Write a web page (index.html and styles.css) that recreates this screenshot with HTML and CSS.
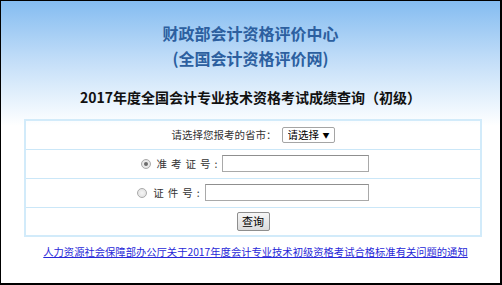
FILE: index.html
```html
<!DOCTYPE html>
<html>
  <head>
    <meta charset="utf-8">
    <title>成绩查询</title>
    <link rel="stylesheet" href="styles.css">
  </head>
  <body>
    <div class="page">
      <div class="header">
        <h1>财政部会计资格评价中心<br>(全国会计资格评价网)</h1>
        <h2>2017年度全国会计专业技术资格考试成绩查询（初级）</h2>
      </div>

      <form class="query">
        <table class="query-table">
          <tr>
            <td>
              <div class="cell">
                <span>请选择您报考的省市：</span>
                <span class="select-wrap">
                  <select>
                    <option>请选择</option>
                  </select>
                </span>
              </div>
            </td>
          </tr>
          <tr>
            <td>
              <div class="cell shift">
                <input type="radio" name="type" checked>
                <span class="spaced">准考证号:</span>
                <input type="text" class="text-input">
              </div>
            </td>
          </tr>
          <tr>
            <td>
              <div class="cell">
                <input type="radio" name="type">
                <span class="spaced">证件号:</span>
                <input type="text" class="text-input wide">
              </div>
            </td>
          </tr>
          <tr>
            <td>
              <div class="cell">
                <button type="button">查询</button>
              </div>
            </td>
          </tr>
        </table>
      </form>

      <p class="notice">
        <a href="#">人力资源社会保障部办公厅关于2017年度会计专业技术初级资格考试合格标准有关问题的通知</a>
      </p>
    </div>
  </body>
</html>
```

FILE: styles.css
```css
* {
  box-sizing: border-box;
  margin: 0;
  padding: 0;
}

html,
body {
  width: 502px;
  height: 285px;
  background: #fff;
  overflow: hidden;
}

body {
  font-family: 'Noto Sans CJK SC', 'Microsoft YaHei', sans-serif;
  color: #333;
}

.page {
  width: 502px;
  height: 285px;
  border-top: 1px solid #000;
  border-left: 1px solid #000;
  border-right: 2px solid #000;
  border-bottom: 2px solid #000;
  background: linear-gradient(#84bcf1 0px, #c3def8 60px, #f1f8fe 110px, #fff 125px);
}

.header {
  text-align: center;
  padding-top: 20px;
}

h1 {
  font-size: 16px;
  line-height: 25px;
  font-weight: bold;
  color: #2c5f9f;
}

h2 {
  margin-top: 16px;
  font-size: 14px;
  line-height: 20px;
  font-weight: bold;
  color: #111;
}

.query {
  margin-top: 12px;
  margin-left: 23px;
  width: 458px;
}

.query-table {
  width: 100%;
  border-collapse: collapse;
  border: 2px solid #d2ebfa;
}

.query-table td {
  height: 29px;
  border-top: 1px solid #cbe7f8;
  font-size: 10.5px;
  line-height: 16px;
  vertical-align: middle;
}

.cell {
  display: flex;
  justify-content: center;
  align-items: center;
}

.cell.shift {
  padding-left: 4px;
}

.select-wrap {
  position: relative;
  display: inline-block;
  margin-left: 5px;
}

.select-wrap::after {
  content: '▼';
  position: absolute;
  right: 5px;
  top: 3px;
  font-size: 7px;
  line-height: 10px;
  color: #000;
  pointer-events: none;
}

select {
  appearance: none;
  -webkit-appearance: none;
  display: block;
  width: 53px;
  height: 16px;
  padding: 0 0 0 5px;
  border: 1px solid #a5a5a5;
  border-radius: 2px;
  background: #fff;
  font-family: inherit;
  font-size: 10.5px;
  line-height: 14px;
  color: #000;
}

input[type='radio'] {
  appearance: none;
  -webkit-appearance: none;
  width: 10px;
  height: 10px;
  margin-right: 6px;
  border: 1px solid #ababab;
  border-radius: 50%;
  background: radial-gradient(circle, #f6f6f6 0%, #dcdcdc 100%);
  position: relative;
}

input[type='radio']:checked::after {
  content: '';
  position: absolute;
  left: 2px;
  top: 2px;
  width: 4px;
  height: 4px;
  border-radius: 50%;
  background: #6b6b6b;
}

.spaced {
  letter-spacing: 4px;
  color: #333;
}

.text-input {
  width: 147px;
  height: 17px;
  margin-left: 1px;
  border: 1px solid #a9a9a9;
  border-top-color: #8f8f8f;
  background: #fff;
}

.text-input.wide {
  width: 164px;
}

button {
  width: 33px;
  height: 19px;
  border: 1px solid #8e8e8e;
  border-radius: 2px;
  background: linear-gradient(#f6f6f6, #dcdcdc);
  font-family: inherit;
  font-size: 11px;
  line-height: 15px;
  color: #000;
}

.notice {
  margin-top: 8px;
  padding-left: 10px;
  text-align: center;
  font-size: 10.3px;
  line-height: 14px;
}

.notice a {
  color: #2828d8;
  text-decoration: underline;
}
```
